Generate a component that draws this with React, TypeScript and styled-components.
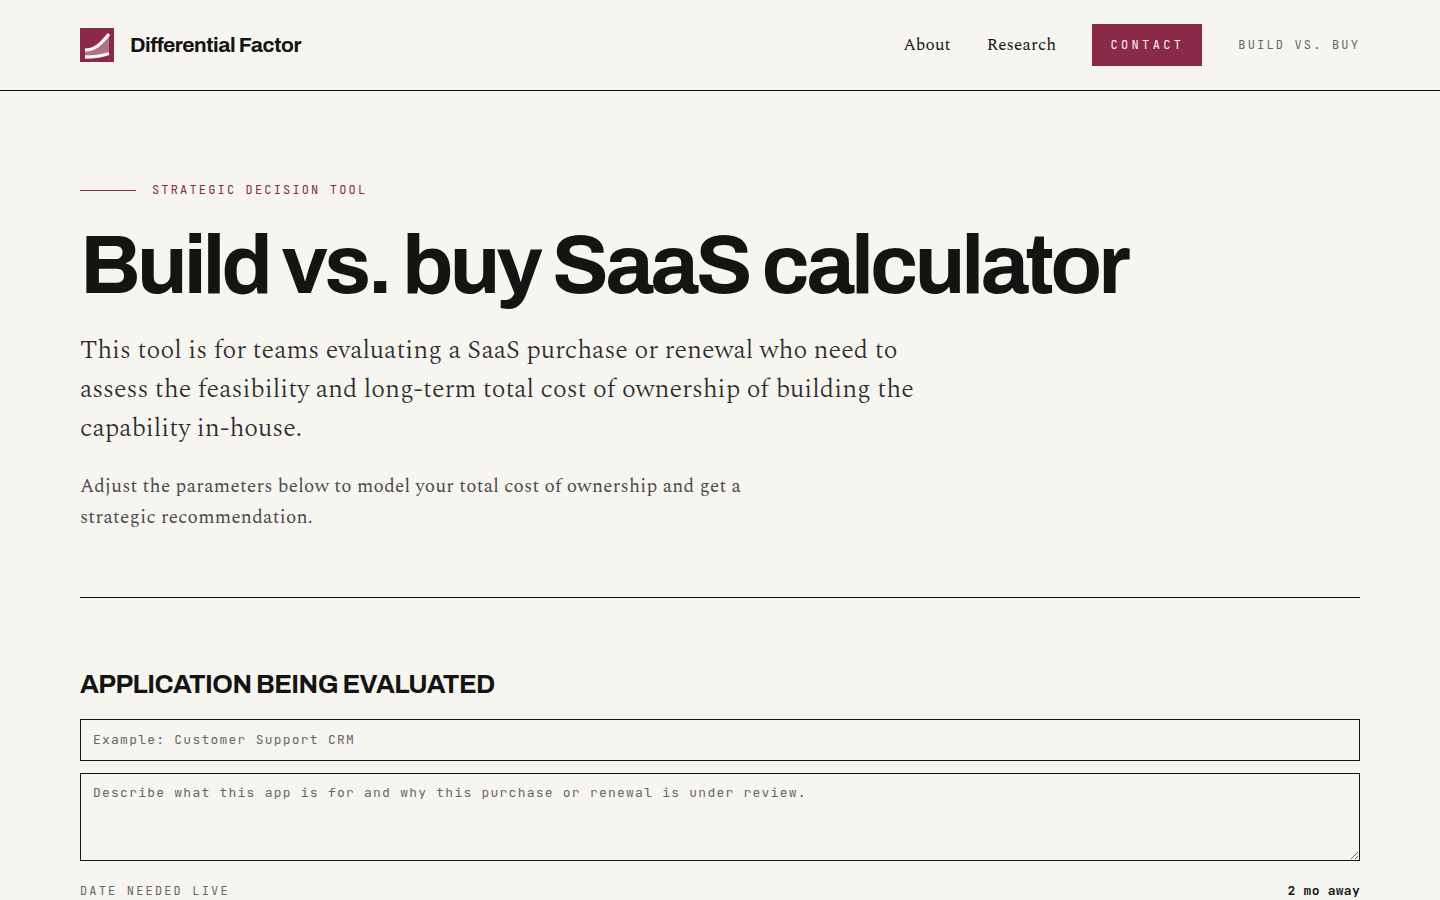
import React from "react";
import styled, { createGlobalStyle, ThemeProvider } from "styled-components";

const theme = {
  paper: "#f6f5f0",
  ink: "#141412",
  body: "#2b2b2b",
  muted: "#4b4b4b",
  faint: "#666666",
  accent: "#8b2948",
  sans: 'Archivo, "Liberation Sans", Arial, sans-serif',
  serif: 'Spectral, "Liberation Serif", "Times New Roman", serif',
  mono: '"JetBrains Mono", "DejaVu Sans Mono", "Liberation Mono", monospace',
};

const GlobalStyle = createGlobalStyle`
  *, *::before, *::after { box-sizing: border-box; }
  body {
    margin: 0;
    background: ${theme.paper};
    color: ${theme.ink};
    font-family: ${theme.serif};
  }
`;

const Header = styled.header`
  display: flex;
  align-items: center;
  justify-content: space-between;
  padding: 24px 80px;
  border-bottom: 1px solid ${({ theme }) => theme.ink};
`;

const Brand = styled.a`
  display: flex;
  align-items: center;
  gap: 16px;
  color: ${({ theme }) => theme.ink};
  font: 700 21px/31px ${({ theme }) => theme.sans};
  letter-spacing: -0.02em;
  text-decoration: none;
`;

const Nav = styled.nav`
  display: flex;
  align-items: center;
  gap: 36px;
`;

const NavLink = styled.a`
  color: ${({ theme }) => theme.ink};
  font-size: 17px;
  line-height: 27px;
  letter-spacing: 0.01em;
  text-decoration: none;
`;

const ContactButton = styled.button`
  height: 42px;
  padding: 0 18px;
  border: 0;
  background: ${({ theme }) => theme.accent};
  color: ${({ theme }) => theme.paper};
  font: 400 12px/20px ${({ theme }) => theme.mono};
  letter-spacing: 0.28em;
  text-transform: uppercase;
`;

const MonoLabel = styled.span<{ $tone?: "accent" | "faint" }>`
  color: ${({ theme, $tone = "faint" }) => theme[$tone]};
  font: 400 12px/19px ${({ theme }) => theme.mono};
  letter-spacing: 0.18em;
  text-transform: uppercase;
`;

const Main = styled.main`
  padding: 0 80px 80px;
`;

const Hero = styled.section`
  padding: 90px 0 64px;
  border-bottom: 1px solid ${({ theme }) => theme.ink};
`;

const Eyebrow = styled.div`
  display: flex;
  align-items: center;
  gap: 16px;
  margin-bottom: 24px;

  &::before {
    content: "";
    width: 56px;
    height: 1px;
    background: ${({ theme }) => theme.accent};
  }
`;

const Title = styled.h1`
  margin: 0 0 24px;
  font: 700 84px/83px ${({ theme }) => theme.sans};
  letter-spacing: -0.043em;
`;

const Lead = styled.p`
  max-width: 860px;
  margin: 0 0 23px;
  color: ${({ theme }) => theme.body};
  font-size: 26px;
  font-weight: 300;
  line-height: 39px;
`;

const Note = styled.p`
  max-width: 680px;
  margin: 0;
  color: ${({ theme }) => theme.muted};
  font-size: 19px;
  line-height: 31px;
  letter-spacing: 0.015em;
`;

const Form = styled.form`
  display: flex;
  flex-direction: column;
  gap: 12px;
  padding-top: 68px;
`;

const SectionTitle = styled.h2`
  margin: 0 0 4px;
  font: 700 26px/37px ${({ theme }) => theme.sans};
  letter-spacing: -0.022em;
  text-transform: uppercase;
`;

const Input = styled.input`
  display: block;
  width: 100%;
  height: 42px;
  padding: 10px 12px 12px;
  border: 1px solid ${({ theme }) => theme.ink};
  border-radius: 0;
  background: transparent;
  color: ${({ theme }) => theme.ink};
  font: 400 13px/18px ${({ theme }) => theme.mono};
  letter-spacing: 0.095em;

  &::placeholder {
    color: ${({ theme }) => theme.faint};
    opacity: 1;
  }
`;

const TextArea = styled(Input).attrs({ as: "textarea" })`
  height: 88px;
  resize: vertical;
`;

const DateRow = styled.div`
  display: flex;
  align-items: center;
  justify-content: space-between;
  padding-top: 8px;
`;

const DateValue = styled.output`
  font: 600 13px/20px ${({ theme }) => theme.mono};
  letter-spacing: 0.02em;
`;

const DateSlider = styled.input`
  width: 100%;
  margin: 0;
  accent-color: ${({ theme }) => theme.accent};
`;

const Logo = () => (
  <svg width="34" height="34" viewBox="0 0 34 34" aria-hidden="true">
    <rect width="34" height="34" fill="#8b2948" />
    <path d="M5 22C15 22 22 15 29 6V25C22 28 14 29 5 29Z" fill="#b0708a" />
    <path d="M5 22C15 22 21 16 29 6" fill="none" stroke="#f6f5f0" strokeWidth="3.4" />
    <path d="M5 29C14 29 21 28.500 29 25.500" fill="none" stroke="#f6f5f0" strokeWidth="3.4" />
  </svg>
);

export default function App() {
  return (
    <ThemeProvider theme={theme}>
      <GlobalStyle />
      <Header>
        <Brand href="#home">
          <Logo />
          Differential Factor
        </Brand>
        <Nav>
          <NavLink href="#about">About</NavLink>
          <NavLink href="#research">Research</NavLink>
          <ContactButton type="button">Contact</ContactButton>
          <MonoLabel>Build vs. Buy</MonoLabel>
        </Nav>
      </Header>
      <Main>
        <Hero>
          <Eyebrow>
            <MonoLabel $tone="accent">Strategic decision tool</MonoLabel>
          </Eyebrow>
          <Title>Build vs. buy SaaS calculator</Title>
          <Lead>
            This tool is for teams evaluating a SaaS purchase or renewal who need to assess the
            feasibility and long-term total cost of ownership of building the capability in-house.
          </Lead>
          <Note>
            Adjust the parameters below to model your total cost of ownership and get a strategic
            recommendation.
          </Note>
        </Hero>
        <Form>
          <SectionTitle id="application">Application being evaluated</SectionTitle>
          <Input aria-labelledby="application" placeholder="Example: Customer Support CRM" />
          <TextArea
            aria-labelledby="application"
            placeholder="Describe what this app is for and why this purchase or renewal is under review."
          />
          <DateRow>
            <MonoLabel as="label" htmlFor="live-date">
              Date needed live
            </MonoLabel>
            <DateValue htmlFor="live-date">2 mo away</DateValue>
          </DateRow>
          <DateSlider id="live-date" type="range" min={0} max={24} defaultValue={2} />
        </Form>
      </Main>
    </ThemeProvider>
  );
}
